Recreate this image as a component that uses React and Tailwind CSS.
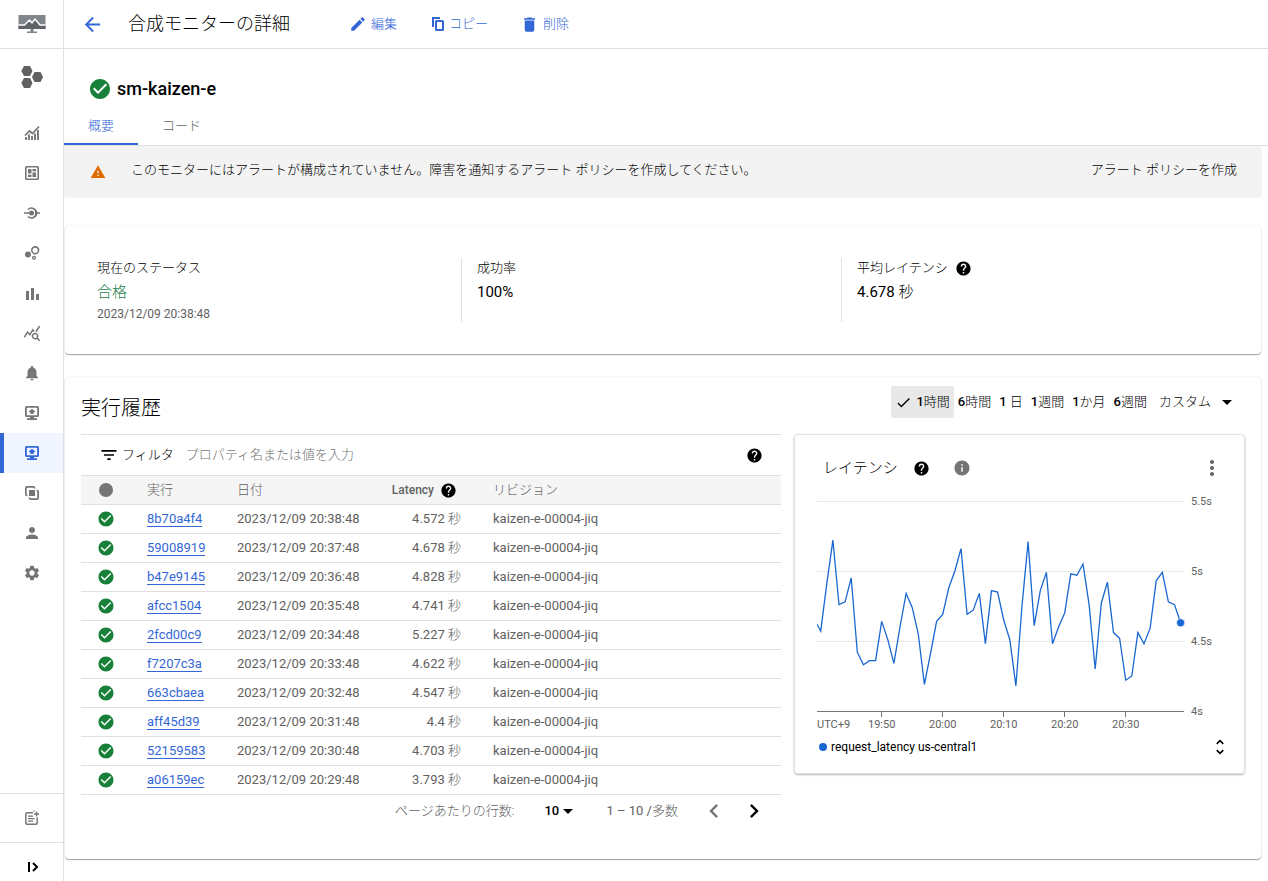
import { useState } from 'react';
import {
  MdArrowBack,
  MdArrowDropDown,
  MdCheck,
  MdCheckCircle,
  MdChevronLeft,
  MdChevronRight,
  MdDelete,
  MdEdit,
  MdFilterList,
  MdHelp,
  MdInfo,
  MdMoreVert,
  MdNotifications,
  MdPerson,
  MdQueryStats,
  MdSettings,
  MdUnfoldMore,
  MdWarning,
} from 'react-icons/md';

const executions = [
  { id: '8b70a4f4', date: '2023/12/09 20:38:48', latency: '4.572' },
  { id: '59008919', date: '2023/12/09 20:37:48', latency: '4.678' },
  { id: 'b47e9145', date: '2023/12/09 20:36:48', latency: '4.828' },
  { id: 'afcc1504', date: '2023/12/09 20:35:48', latency: '4.741' },
  { id: '2fcd00c9', date: '2023/12/09 20:34:48', latency: '5.227' },
  { id: 'f7207c3a', date: '2023/12/09 20:33:48', latency: '4.622' },
  { id: '663cbaea', date: '2023/12/09 20:32:48', latency: '4.547' },
  { id: 'aff45d39', date: '2023/12/09 20:31:48', latency: '4.4' },
  { id: '52159583', date: '2023/12/09 20:30:48', latency: '4.703' },
  { id: 'a06159ec', date: '2023/12/09 20:29:48', latency: '3.793' },
];

const ranges = [
  { id: '1h', count: '1', unit: '時間' },
  { id: '6h', count: '6', unit: '時間' },
  { id: '1d', count: '1', unit: ' 日' },
  { id: '1w', count: '1', unit: '週間' },
  { id: '1m', count: '1', unit: 'か月' },
  { id: '6w', count: '6', unit: '週間' },
];

// One sample per minute, 19:40 to 20:39
const samples = [
  4.57, 4.91, 5.22, 4.76, 4.78, 4.95, 4.42, 4.33, 4.36, 4.36,
  4.64, 4.51, 4.34, 4.6, 4.84, 4.74, 4.55, 4.19, 4.41, 4.64,
  4.69, 4.88, 5.0, 5.16, 4.69, 4.72, 4.84, 4.48, 4.86, 4.85,
  4.65, 4.51, 4.18, 4.75, 5.21, 4.61, 4.86, 4.99, 4.48, 4.6,
  4.7, 4.98, 4.97, 5.05, 4.76, 4.3, 4.77, 4.92, 4.56, 4.52,
  4.22, 4.25, 4.56, 4.48, 4.59, 4.93, 4.99, 4.78, 4.76, 4.63,
];

function MetricsIcon() {
  return (
    <svg width="16" height="16" viewBox="0 0 16 16" fill="none" stroke="currentColor" aria-hidden="true">
      <path d="M1 10.5 5.5 6l3 2.5L15 1.5" strokeWidth="1.7" />
      <path d="M2 15v-3M5 15V9.5M8 15v-4M11 15V8.5M14 15V5" strokeWidth="1.9" />
    </svg>
  );
}

function DashboardIcon() {
  return (
    <svg width="14" height="14" viewBox="0 0 14 14" fill="currentColor" aria-hidden="true">
      <path fillRule="evenodd" d="M1.5 0h11A1.5 1.5 0 0 1 14 1.5v11a1.5 1.5 0 0 1-1.5 1.5h-11A1.5 1.5 0 0 1 0 12.5v-11A1.5 1.5 0 0 1 1.5 0ZM1.6 1.6v10.8h10.8V1.6Z" />
      <path d="M3 3h3.5v4.5H3zM7.5 3H11v2.2H7.5zM3 8.7h3.5V11H3zM7.5 6.4H11V11H7.5z" />
    </svg>
  );
}

function ServicesIcon() {
  return (
    <svg width="16" height="14" viewBox="0 0 16 14" fill="none" stroke="currentColor" aria-hidden="true">
      <path d="M0 7h5M12 7h4" strokeWidth="1.7" />
      <path d="M4 3.5a5 5 0 0 1 8.500 3.5 5 5 0 0 1-8.500 3.5" strokeWidth="1.7" />
      <circle cx="7.5" cy="7" r="2.5" fill="currentColor" stroke="none" />
      <path d="m11 4.5 3 2.500-3 2.500z" fill="currentColor" stroke="none" />
    </svg>
  );
}

function BubblesIcon() {
  return (
    <svg width="16" height="14" viewBox="0 0 16 14" fill="none" stroke="currentColor" strokeWidth="1.6" aria-hidden="true">
      <circle cx="4" cy="8.5" r="3" fill="currentColor" stroke="none" />
      <circle cx="11.2" cy="4.3" r="3.4" />
      <circle cx="10" cy="11.8" r="1.4" strokeWidth="1.3" />
    </svg>
  );
}

function BarsIcon() {
  return (
    <svg width="14" height="14" viewBox="0 0 14 14" fill="currentColor" aria-hidden="true">
      <path d="M1 5h3v9H1zM6 2h3v12H6zM11 8h3v6h-3z" />
    </svg>
  );
}

function MonitorIcon() {
  return (
    <svg width="14" height="14" viewBox="0 0 14 14" fill="currentColor" aria-hidden="true">
      <path fillRule="evenodd" d="M1.5 0h11A1.5 1.5 0 0 1 14 1.5v8a1.5 1.5 0 0 1-1.5 1.5H9v1.300h3V14H2v-1.700h3V11H1.5A1.5 1.5 0 0 1 0 9.5v-8A1.5 1.5 0 0 1 1.5 0Zm.3 1.800v7.400h10.400V1.800Z" />
      <path d="m7 2.800 3.700 3.200H9v1.800H5V6H3.300z" />
    </svg>
  );
}

function GroupsIcon() {
  return (
    <svg width="14" height="14" viewBox="0 0 14 14" fill="none" stroke="currentColor" strokeWidth="1.7" aria-hidden="true">
      <path d="M2.500 9.500H2A1.200 1.200 0 0 1 .85 8.300V2A1.200 1.200 0 0 1 2 .85h6.300A1.200 1.200 0 0 1 9.500 2v.5" />
      <path d="M11.500 4.500h.5a1.200 1.200 0 0 1 1.150 1.200V12A1.200 1.200 0 0 1 12 13.150H5.700A1.200 1.200 0 0 1 4.500 12v-.5" />
      <path d="M4 4h6v6H4z" fill="currentColor" stroke="none" />
    </svg>
  );
}

function NotesIcon() {
  return (
    <svg width="14" height="16" viewBox="0 0 14 16" fill="none" stroke="currentColor" strokeWidth="1.5" aria-hidden="true">
      <path d="M8 2.800H2A1.200 1.200 0 0 0 .8 4v9A1.200 1.200 0 0 0 2 14.200h9a1.200 1.200 0 0 0 1.200-1.200V7.500" />
      <path d="M3 6.200h5M3 8.700h6.500M3 11.200h5" strokeWidth="1.300" />
      <path d="M11.500 1.500v5M9 4h5" strokeWidth="1.300" />
      <path d="M9 .3v1.600" strokeWidth="1" />
    </svg>
  );
}

function ExpandIcon() {
  return (
    <svg width="12" height="10" viewBox="0 0 12 10" fill="none" stroke="currentColor" strokeWidth="2" aria-hidden="true">
      <path d="M2 0v10M6 1l4 4-4 4" />
    </svg>
  );
}

function CopyIcon() {
  return (
    <svg width="14" height="14" viewBox="0 0 14 14" fill="none" stroke="currentColor" strokeWidth="2" aria-hidden="true">
      <path d="M2 10V1h7" />
      <rect x="5" y="4" width="7" height="9" rx="0.5" />
    </svg>
  );
}

function MonitoringLogo() {
  return (
    <svg width="28" height="20" viewBox="0 0 28 20" aria-hidden="true">
      <path fill="#80868b" d="M.5 1h27v14H.5z" />
      <path fill="#5f6368" d="M.5 11.500h6l5-5 2.500 2.500 3-3.500 5 6h5.500V15H.5z" />
      <path fill="none" stroke="#fff" strokeWidth="1.300" d="M.5 11h6L11.500 6 14 9l3-4 5 6h5.500" />
      <path fill="#80868b" d="M12.500 15h3v3h-3zM9 17.500h10V19H9z" />
    </svg>
  );
}

function HexagonsLogo() {
  return (
    <svg width="22" height="24" viewBox="0 0 22 24" fill="#616161" aria-hidden="true">
      <path d="M3 1h6l2.500 5L9 11H3L.3 6zM3 13h6l2.500 5L9 23H3L.3 18zM13.500 7h6l2.500 5-2.500 5h-6L11 12z" />
    </svg>
  );
}

const navItems = [
  { label: '概要', icon: <MetricsIcon /> },
  { label: 'ダッシュボード', icon: <DashboardIcon /> },
  { label: '統合', icon: <ServicesIcon /> },
  { label: 'サービス', icon: <BubblesIcon /> },
  { label: 'Metrics Explorer', icon: <BarsIcon /> },
  { label: 'ログ エクスプローラ', icon: <MdQueryStats size={18} /> },
  { label: 'アラート', icon: <MdNotifications size={18} /> },
  { label: '稼働時間チェック', icon: <MonitorIcon /> },
  { label: '合成モニター', icon: <MonitorIcon />, active: true },
  { label: 'グループ', icon: <GroupsIcon /> },
  { label: '権限', icon: <MdPerson size={18} /> },
  { label: '設定', icon: <MdSettings size={18} /> },
];

function Sidebar() {
  return (
    <aside className="flex w-16 shrink-0 flex-col border-r border-[#e0e0e0] text-[#757575]">
      <div className="flex h-[49px] items-center justify-center border-b border-[#e0e0e0]">
        <MonitoringLogo />
      </div>
      <div className="flex h-16 items-center justify-center pb-2">
        <HexagonsLogo />
      </div>
      <nav>
        {navItems.map(item => (
          <a
            key={item.label}
            href="#"
            aria-label={item.label}
            className={`flex h-10 items-center justify-center border-l-4 pr-1 ${
              item.active ? 'border-[#3367d6] bg-[#f0f5ff] text-[#3367d6]' : 'border-transparent'
            }`}
          >
            {item.icon}
          </a>
        ))}
      </nav>
      <a href="#" aria-label="リリースノート" className="mt-auto flex h-[49px] items-center justify-center border-t border-[#e0e0e0]">
        <NotesIcon />
      </a>
      <button aria-label="メニューを開く" className="flex h-[39px] items-center justify-center border-t border-[#e0e0e0] pt-2.5 pl-0.5 text-black">
        <ExpandIcon />
      </button>
    </aside>
  );
}

function Header() {
  return (
    <header className="flex h-[49px] items-center border-b border-[#e0e0e0] px-[17px]">
      <button aria-label="戻る" className="text-[#3367d6]">
        <MdArrowBack size={23} />
      </button>
      <h1 className="ml-6 text-lg font-light">合成モニターの詳細</h1>
      <div className="ml-[59px] flex gap-8 font-light text-[#3367d6]">
        <button className="flex items-center gap-1">
          <MdEdit size={18} />
          編集
        </button>
        <button className="flex items-center gap-1 pl-0.5">
          <CopyIcon />
          コピー
        </button>
        <button className="flex items-center gap-1">
          <MdDelete size={19} />
          削除
        </button>
      </div>
    </header>
  );
}

function Tabs() {
  const [tab, setTab] = useState('overview');
  const tabs = [
    { id: 'overview', label: '概要' },
    { id: 'code', label: 'コード' },
  ];

  return (
    <div role="tablist" className="flex h-[38px] border-b border-[#e0e0e0]">
      {tabs.map(t => (
        <button
          key={t.id}
          role="tab"
          aria-selected={tab === t.id}
          onClick={() => setTab(t.id)}
          className={`border-b-2 px-6 font-light ${
            tab === t.id ? 'border-[#3367d6] text-[#3367d6]' : 'border-transparent text-[#616161]'
          }`}
        >
          {t.label}
        </button>
      ))}
    </div>
  );
}

function Summary() {
  return (
    <section className="mt-7 mr-[7px] ml-px rounded-[4px] pt-8 pr-10 pb-8 pl-4 shadow-[0_1px_1px_rgba(0,0,0,0.35),0_0_2px_rgba(0,0,0,0.12)]">
      <div className="grid h-16 grid-cols-3">
        <div className="pl-4">
          <h2 className="leading-5 font-light">現在のステータス</h2>
          <p className="mt-1 text-[15px] leading-5 font-light text-[#188048]">合格</p>
          <p className="mt-1 text-xs leading-4 text-[#616161]">2023/12/09 20:38:48</p>
        </div>
        <div className="border-l border-[#e0e0e0] pl-[15px]">
          <h2 className="leading-5 font-light">成功率</h2>
          <p className="mt-1 text-[15px] leading-5">100%</p>
        </div>
        <div className="border-l border-[#e0e0e0] pl-[15px]">
          <h2 className="flex items-center gap-[7px] leading-5 font-light">
            平均レイテンシ
            <MdHelp size={17} />
          </h2>
          <p className="mt-1 text-[15px] leading-5">
            4.678 <span className="font-light">秒</span>
          </p>
        </div>
      </div>
    </section>
  );
}

function RangePicker() {
  const [range, setRange] = useState('1h');

  return (
    <div className="flex h-8 items-center">
      {ranges.map(r => (
        <button
          key={r.id}
          onClick={() => setRange(r.id)}
          className={`flex h-8 items-center rounded-[2px] px-1 font-medium whitespace-pre ${range === r.id ? 'bg-[#e8e8e8]' : ''}`}
        >
          {range === r.id && <MdCheck size={17} className="mr-1" />}
          {r.count}
          <span className="font-light">{r.unit}</span>
        </button>
      ))}
      <button className="ml-2 flex items-center gap-1 font-light">
        カスタム
        <MdArrowDropDown size={24} />
      </button>
    </div>
  );
}

function ExecutionTable() {
  return (
    <div className="min-w-0">
      <div className="flex h-[41px] items-center border-t border-[#e0e0e0] pr-[18px] pl-[18px]">
        <MdFilterList size={20} />
        <label htmlFor="filter" className="ml-[3px] font-light">
          フィルタ
        </label>
        <input
          id="filter"
          className="ml-3 min-w-0 flex-1 font-light outline-none placeholder:text-[#757575]"
          placeholder="プロパティ名または値を入力"
        />
        <MdHelp size={17} />
      </div>
      <table className="w-full table-fixed border-t border-[#e0e0e0] text-left text-[#616161]">
        <colgroup>
          <col className="w-[66px]" />
          <col className="w-[90px]" />
          <col className="w-[144px]" />
          <col className="w-20" />
          <col />
        </colgroup>
        <thead>
          <tr className="h-[29px] border-b border-[#e0e0e0] bg-[#f5f5f5]">
            <th aria-label="ステータス" className="pl-[18px]">
              <span className="block size-[14px] rounded-full bg-[#757575]" />
            </th>
            <th className="font-light">実行</th>
            <th className="font-light">日付</th>
            <th className="text-xs font-medium">
              <span className="flex items-center justify-end gap-1.5 pr-1">
                Latency
                <MdHelp size={17} className="shrink-0 text-black" />
              </span>
            </th>
            <th className="pl-8 font-light">リビジョン</th>
          </tr>
        </thead>
        <tbody>
          {executions.map(e => (
            <tr key={e.id} className="h-[29px] border-b border-[#e0e0e0]">
              <td className="pl-4">
                <MdCheckCircle size={18} className="text-[#188038]" />
              </td>
              <td>
                <a href="#" className="border-b border-[#3367d6] text-[#3367d6]">
                  {e.id}
                </a>
              </td>
              <td className="whitespace-nowrap">{e.date}</td>
              <td className="text-right">
                {e.latency} <span className="font-light">秒</span>
              </td>
              <td className="pl-8">kaizen-e-00004-jiq</td>
            </tr>
          ))}
        </tbody>
      </table>
      <div className="flex h-8 items-center justify-end pr-[13px] text-[#616161]">
        <label htmlFor="page-size" className="font-light">
          ページあたりの行数:
        </label>
        <div className="relative ml-[30px] flex items-center text-black">
          <select id="page-size" className="w-8 appearance-none font-medium outline-none" defaultValue="10">
            <option>10</option>
            <option>20</option>
            <option>50</option>
          </select>
          <MdArrowDropDown size={24} className="pointer-events-none absolute left-3" />
        </div>
        <span className="ml-[30px]">
          1 – 10 /<span className="font-light">多数</span>
        </span>
        <button aria-label="前のページ" className="ml-[22px] text-[#757575]">
          <MdChevronLeft size={28} />
        </button>
        <button aria-label="次のページ" className="ml-3 text-black">
          <MdChevronRight size={28} />
        </button>
      </div>
    </div>
  );
}

function LatencyChart() {
  const x = minute => 3.7 + minute * 6.1;
  const y = seconds => 8 + (5.5 - seconds) * 140;
  const line = [[0, y(4.62)], ...samples.map((s, i) => [x(i), y(s)])].map(p => p.join(',')).join(' ');
  const last = samples.length - 1;

  return (
    <svg viewBox="0 0 405 240" className="w-full text-[11px]" role="img" aria-label="レイテンシ">
      {[5.5, 5, 4.5].map(s => (
        <path key={s} d={`M0 ${y(s) + 0.5}H367`} stroke="#e8e8e8" />
      ))}
      <path d="M0 218.5H367" stroke="#757575" />
      {[5.5, 5, 4.5, 4].map(s => (
        <text key={s} x="374" y={y(s) + 4} fill="#616161">
          {s}s
        </text>
      ))}
      <text x="0" y="235" fill="#616161">
        UTC+9
      </text>
      {['19:50', '20:00', '20:10', '20:20', '20:30'].map((t, i) => (
        <g key={t}>
          <path d={`M${Math.round(x(10 + i * 10)) - 0.5} 219v5`} stroke="#757575" />
          <text x={x(10 + i * 10)} y="235" textAnchor="middle" fill="#616161">
            {t}
          </text>
        </g>
      ))}
      <polyline points={line} fill="none" stroke="#1967d2" strokeWidth="1.3" />
      <circle cx={x(last)} cy={y(samples[last])} r="4" fill="#1967d2" stroke="#fff" strokeWidth="0.5" />
    </svg>
  );
}

function LatencyCard() {
  return (
    <div className="h-[340px] rounded-[4px] border border-[#e0e0e0] px-[22px] shadow-[0_1px_2px_rgba(0,0,0,0.3)]">
      <div className="flex h-[58px] items-center pt-2 pl-1.5">
        <h3 className="text-[15px] font-light">レイテンシ</h3>
        <MdHelp size={17} className="ml-[15px]" />
        <MdInfo size={18} className="ml-[23px] text-[#757575]" />
        <button aria-label="その他" className="mr-[-2px] ml-auto text-[#616161]">
          <MdMoreVert size={24} />
        </button>
      </div>
      <LatencyChart />
      <div className="flex h-7 items-center text-xs">
        <span className="ml-0.5 size-2 rounded-full bg-[#1967d2]" />
        <span className="ml-1">request_latency us-central1</span>
        <button aria-label="並べ替え" className="mr-[-8px] ml-auto">
          <MdUnfoldMore size={20} />
        </button>
      </div>
    </div>
  );
}

export default function App() {
  return (
    <div className="flex min-h-screen bg-white font-['Roboto','Noto_Sans_CJK_JP',sans-serif] text-[13px] text-black" lang="ja">
      <Sidebar />
      <main className="min-w-0 flex-1">
        <Header />
        <div className="flex h-[59px] items-center gap-[5px] px-6 pt-5">
          <MdCheckCircle size={24} className="text-[#188038]" />
          <h2 className="text-lg font-medium">sm-kaizen-e</h2>
        </div>
        <Tabs />
        <div className="mr-1.5 flex h-[52px] items-center rounded-[4px] bg-[#f3f3f3] pr-[25px] pl-[26px] font-light">
          <MdWarning size={16} className="text-[#e06c00]" />
          <p className="ml-[25px] pb-1">
            このモニターにはアラートが構成されていません。障害を通知するアラート ポリシーを作成してください。
          </p>
          <button className="ml-auto pb-1">アラート ポリシーを作成</button>
        </div>
        <Summary />
        <section className="mt-[23px] mr-[7px] ml-px rounded-[4px] px-4 pt-[9px] pb-8 shadow-[0_1px_1px_rgba(0,0,0,0.35),0_0_2px_rgba(0,0,0,0.12)]">
          <div className="flex h-12 items-start justify-between pr-1.5">
            <h2 className="pt-2 text-xl font-light">実行履歴</h2>
            <RangePicker />
          </div>
          <div className="grid grid-cols-[700fr_451fr] gap-[13px]">
            <ExecutionTable />
            <LatencyCard />
          </div>
        </section>
      </main>
    </div>
  );
}
